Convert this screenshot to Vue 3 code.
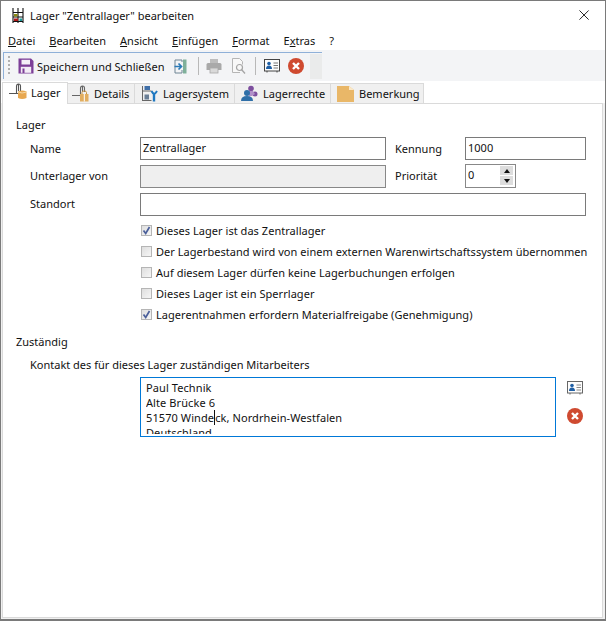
<script setup>
const checks = [
  { label: 'Dieses Lager ist das Zentrallager', on: true },
  { label: 'Der Lagerbestand wird von einem externen Warenwirtschaftssystem übernommen', on: false },
  { label: 'Auf diesem Lager dürfen keine Lagerbuchungen erfolgen', on: false },
  { label: 'Dieses Lager ist ein Sperrlager', on: false },
  { label: 'Lagerentnahmen erfordern Materialfreigabe (Genehmigung)', on: true }
]
</script>

<template>
  <div class="window">
    <header class="titlebar">
      <svg class="appicon" viewBox="0 0 12 15" width="12" height="15">
        <path d="M1 0v15M6 0v15M11 0v15M1 4.500h10M1 9h10M1 13.500h10" stroke="#111" stroke-width="1.100" fill="none"/>
        <rect x="2" y="6" width="3.500" height="2.500" fill="#8a8a10"/>
        <rect x="2" y="10.500" width="4" height="2.500" fill="#b01818"/>
        <rect x="7.500" y="10.500" width="2.500" height="2.500" fill="#1a9a9a"/>
      </svg>
      <span class="title">Lager "Zentrallager" bearbeiten</span>
      <svg class="close" viewBox="0 0 12 12" width="11" height="11">
        <path d="M.5.5l10 10M10.500.5l-10 10" stroke="#111" stroke-width="1" fill="none"/>
      </svg>
    </header>

    <nav class="menubar">
      <span class="menu"><u>D</u>atei</span>
      <span class="menu"><u>B</u>earbeiten</span>
      <span class="menu"><u>A</u>nsicht</span>
      <span class="menu"><u>E</u>infügen</span>
      <span class="menu"><u>F</u>ormat</span>
      <span class="menu">E<u>x</u>tras</span>
      <span class="menu">?</span>
    </nav>

    <div class="toolstrip">
      <div class="toolbar">
        <span class="grip"></span>
        <svg class="tool first" viewBox="0 0 16 16" width="16" height="16">
          <path d="M.5.500h12.500l2.500 2.500v12.500H.5z" fill="#7d3f98"/>
          <rect x="3.500" y="1.800" width="8.500" height="4.700" fill="#f6f1f8"/>
          <rect x="2.800" y="8.800" width="10.400" height="6" fill="#f3edf6"/>
          <rect x="4.500" y="10.500" width="2" height="4.500" fill="#7d3f98"/>
        </svg>
        <span class="savetext">Speichern und Schließen</span>
        <svg class="tool exit" viewBox="0 0 13 15" width="13" height="15">
          <path d="M8 3V1H1v13h7v-3" stroke="#6f8594" fill="none"/>
          <rect x="9" y=".5" width="3.500" height="14" fill="#7fb09a"/>
          <path d="M.5 7.500h6.500M4.500 4.500l3 3-3 3" stroke="#2a7ab8" stroke-width="1.700" fill="none"/>
        </svg>
        <span class="sep"></span>
        <svg class="tool print" viewBox="0 0 16 16" width="16" height="16">
          <rect x="4" y="1" width="8" height="4" fill="#bdbdbd"/>
          <path d="M.5 6.500q0-1.500 1.500-1.500h12q1.500 0 1.500 1.500V12H.5z" fill="#a9a9a9"/>
          <rect x="4" y="10" width="8" height="5" fill="#d9d9d9" stroke="#a9a9a9" stroke-width=".8"/>
        </svg>
        <svg class="tool preview" viewBox="0 0 16 16" width="16" height="16">
          <path d="M9 14.500H1.500V.5h7l3 3v3" stroke="#b5b5b5" fill="#f8f8f8"/>
          <circle cx="8.500" cy="9.500" r="3" stroke="#a5a5a5" fill="#f8f8f8" stroke-width="1.200"/>
          <path d="M10.500 11.500l3.500 4" stroke="#a5a5a5" stroke-width="1.400"/>
        </svg>
        <span class="sep second"></span>
        <svg class="tool card" viewBox="0 0 16 14" width="16" height="14">
          <rect x=".5" y=".5" width="15" height="11.500" fill="#fdfdfd" stroke="#444"/>
          <circle cx="5" cy="4.500" r="1.800" fill="#1f5fa5"/>
          <path d="M2 10q0-3.500 3-3.500t3 3.500z" fill="#1f5fa5"/>
          <path d="M9.500 4h4.500M9.500 6.500h4.500M9.500 9h4.500" stroke="#777"/>
          <path d="M3 12v1.500M13 12v1.500" stroke="#444"/>
        </svg>
        <svg class="tool cancel" viewBox="0 0 16 16" width="16" height="16">
          <circle cx="8" cy="8" r="8" fill="#cf4a30"/>
          <path d="M5 5l6 6M11 5l-6 6" stroke="#fff" stroke-width="2.400"/>
        </svg>
        <span class="blank"></span>
      </div>
    </div>

    <div class="tabs">
      <div class="tab active">
        <svg viewBox="0 0 18 17" width="18" height="17">
          <path d="M0 10.500h9M7.500 10.500V3.500Q7.500 1 9.500 1T11.500 3v5M9.500 1v7" stroke="#555" stroke-width="1.100" fill="none"/>
          <path d="M9 8.500q4-2 8.500 0v6.500q-4.500 2-8.500 0z" fill="#e8a850"/>
          <path d="M9 9q4 2 8.500 0" stroke="#f6d9a8" fill="none"/>
        </svg>
        <span>Lager</span>
      </div>
      <div class="tab details">
        <svg viewBox="0 0 17 17" width="17" height="17">
          <path d="M0 10.500h9M8.500 10V3.500Q8.500 1 10.500 1T12.500 3v4M10.500 1v6" stroke="#666" stroke-width="1.100" fill="none"/>
          <path d="M8 9h8.500v7.500H8z" fill="#e2ae5f"/>
          <path d="M12.300 9v7.500" stroke="#fff"/>
          <path d="M10 9V7.500Q10 6 12.300 6T14.500 7.500V9" stroke="#c99643" fill="none"/>
        </svg>
        <span>Details</span>
      </div>
      <div class="tab system">
        <svg viewBox="0 0 17 17" width="17" height="17">
          <path d="M1.500 1v15M1.500 15.500h9M1.500 6h9" stroke="#666" fill="none"/>
          <rect x="3.500" y="1" width="5.500" height="4" fill="#3f6fa8"/>
          <rect x="3.500" y="9.500" width="4.500" height="5" fill="#6a7f96"/>
          <path d="M13 9v7.500" stroke="#1f78c0" stroke-width="2.400"/>
          <path d="M10.500 6q2.500 5.500 5.500 0" stroke="#1f78c0" stroke-width="2" fill="none"/>
        </svg>
        <span>Lagersystem</span>
      </div>
      <div class="tab rights">
        <svg viewBox="0 0 17 17" width="17" height="17">
          <circle cx="10" cy="3.500" r="2.800" fill="#7d4f9e"/>
          <circle cx="14" cy="9" r="2.500" fill="#7d4f9e"/>
          <path d="M7 6h5l2 3-3 2H8z" fill="#b090c8"/>
          <circle cx="6" cy="8" r="3" fill="#2f6fa8"/>
          <path d="M0 16q0-5 6-5t6 5z" fill="#2f6fa8"/>
        </svg>
        <span>Lagerrechte</span>
      </div>
      <div class="tab note">
        <svg viewBox="0 0 17 16" width="17" height="16">
          <path d="M0 0h12l5 4v12H0z" fill="#e9b768"/>
          <path d="M12 0l5 4h-5z" fill="#fbe9c9"/>
        </svg>
        <span>Bemerkung</span>
      </div>
    </div>

    <div class="pagewrap">
      <main class="page">
        <section>
          <h2 class="grouptitle">Lager</h2>
          <div class="row first-row">
            <label class="lbl">Name</label>
            <div class="field wide">Zentrallager</div>
            <label class="lbl2">Kennung</label>
            <div class="field short">1000</div>
          </div>
          <div class="row second-row">
            <label class="lbl lift">Unterlager von</label>
            <div class="field wide disabled"></div>
            <label class="lbl2 lift">Priorität</label>
            <div class="field spin">
              <span class="spinval">0</span>
              <span class="spinbtns">
                <span class="sbtn"><i class="up"></i></span>
                <span class="sbtn"><i class="down"></i></span>
              </span>
            </div>
          </div>
          <div class="row third-row">
            <label class="lbl lift">Standort</label>
            <div class="field full"></div>
          </div>
          <ul class="checks">
            <li v-for="c in checks" :key="c.label" class="check">
              <span class="box">
                <svg v-if="c.on" viewBox="0 0 11 11" width="11" height="11">
                  <path d="M2.500 5.500l2.200 3 3.800-6.500" stroke="#4a5f9a" stroke-width="1.700" fill="none"/>
                </svg>
              </span>
              <span>{{ c.label }}</span>
            </li>
          </ul>
        </section>

        <section class="second-group">
          <h2 class="grouptitle">Zuständig</h2>
          <p class="hint">Kontakt des für dieses Lager zuständigen Mitarbeiters</p>
          <div class="contact">
            <div class="memo">
              <div class="memotext">
                <div>Paul Technik</div>
                <div>Alte Brücke 6</div>
                <div>51570 Winde<span class="caret"></span>ck, Nordrhein-Westfalen</div>
                <div>Deutschland</div>
              </div>
            </div>
            <div class="memoicons">
              <svg viewBox="0 0 16 14" width="16" height="14">
                <rect x=".5" y=".5" width="15" height="11.500" fill="#fdfdfd" stroke="#666"/>
                <circle cx="5" cy="4.500" r="1.800" fill="#1f5fa5"/>
                <path d="M2 10q0-3.500 3-3.500t3 3.500z" fill="#1f5fa5"/>
                <path d="M9.500 4h4.500M9.500 6.500h4.500M9.500 9h4.500" stroke="#888"/>
                <path d="M3 12v1.500M13 12v1.500" stroke="#666"/>
              </svg>
              <svg viewBox="0 0 16 16" width="16" height="16">
                <circle cx="8" cy="8" r="8" fill="#cf4a30"/>
                <path d="M5 5l6 6M11 5l-6 6" stroke="#fff" stroke-width="2.400"/>
              </svg>
            </div>
          </div>
        </section>
      </main>
    </div>
  </div>
</template>

<style>
html, body { margin: 0; padding: 0; background: #fff; }
</style>

<style scoped>
.window {
  width: 606px;
  height: 621px;
  box-sizing: border-box;
  border: 1px solid #7a7a7a;
  border-bottom-width: 2px;
  background: #fff;
  font-family: "Noto Sans", "Open Sans", sans-serif;
  font-size: 11px;
  color: #111;
  display: flex;
  flex-direction: column;
  overflow: hidden;
}
.titlebar {
  height: 29px;
  display: flex;
  align-items: center;
  padding: 0 10px 0 11px;
  flex: none;
}
.title { margin-left: 6px; flex: 1; }
.close { margin-right: 5px; }
.menubar {
  height: 20px;
  display: flex;
  align-items: center;
  gap: 14px;
  padding-left: 7px;
  flex: none;
}
.toolstrip {
  height: 31px;
  background: #f3f4f6;
  flex: none;
  padding: 2px 0 0 2px;
  box-sizing: border-box;
}
.toolbar {
  width: 319px;
  height: 27px;
  display: flex;
  align-items: center;
  border-top: 1px solid #8fb0d8;
  border-left: 1px solid #8fb0d8;
  box-sizing: border-box;
  padding-left: 4px;
}
.grip { width: 2px; height: 20px; background: repeating-linear-gradient(#b0b0b0 0 2px, transparent 2px 4px); flex: none; }
.tool { flex: none; }
.first { margin-left: 8px; }
.savetext { margin-left: 3px; white-space: nowrap; flex: none; }
.exit { margin-left: 9px; }
.sep { width: 1px; height: 18px; background: #b8b8b8; margin: 0 7px 0 11px; flex: none; }
.preview { margin-left: 9px; }
.sep.second { margin: 0 8px; }
.cancel { margin-left: 8px; }
.blank { width: 12px; height: 25px; background: #eaebeb; margin-left: 6px; flex: none; }
.tabs {
  display: flex;
  align-items: flex-end;
  height: 22px;
  padding-left: 1px;
  flex: none;
}
.tab {
  height: 19px;
  box-sizing: content-box;
  display: flex;
  align-items: center;
  gap: 5px;
  padding: 0 0 0 6px;
  background: #f0f0f0;
  border: 1px solid #dadada;
  border-bottom: 0;
  border-left: 0;
  white-space: nowrap;
}
.tab svg { flex: none; }
.tab.active {
  width: 58px;
  height: 21px;
  background: #fff;
  border-left: 1px solid #dadada;
  padding-left: 6px;
  gap: 4px;
  margin-bottom: -1px;
  position: relative;
  z-index: 1;
  align-items: flex-start;
}
.tab.active span { margin-top: 2px; }
.details { width: 62px; padding-left: 4px; }
.system { width: 93px; }
.rights { width: 89px; }
.note { width: 86px; }
.pagewrap {
  flex: 1;
  display: flex;
  background: #f0f0f0;
  padding: 0 2px 1px 1px;
  min-height: 0;
}
.page {
  flex: 1;
  background: #fff;
  border: 1px solid #dadada;
  padding: 13px 0 0 13px;
}
.grouptitle { font-size: 11px; font-weight: 400; margin: 0; line-height: 16px; }
.row {
  display: flex;
  align-items: center;
}
.first-row { margin-top: 4px; }
.second-row { margin-top: 4px; }
.third-row { margin-top: 5px; }
.lbl { width: 110px; padding-left: 14px; flex: none; box-sizing: content-box; }
.lbl2 { width: 70px; margin-left: 9px; flex: none; }
.lift { padding-bottom: 2px; }
.field {
  box-sizing: border-box;
  height: 23px;
  border: 1px solid #7a7a7a;
  padding: 0 2px;
  line-height: 19px;
}
.wide { width: 246px; }
.short { width: 121px; }
.full { width: 446px; }
.disabled { background: #efefef; border-color: #888; }
.spin { width: 51px; height: 24px; display: flex; justify-content: space-between; border-color: #888; }
.spinbtns { display: flex; flex-direction: column; gap: 1px; padding: 1px 1px 1px 0; margin-right: -1px; }
.sbtn { width: 13px; height: 9px; background: #ddd; display: flex; align-items: center; justify-content: center; }
.up { border: 3px solid transparent; border-top: 0; border-bottom: 4px solid #111; }
.down { border: 3px solid transparent; border-bottom: 0; border-top: 4px solid #111; }
.checks { list-style: none; margin: 4px 0 0 125px; padding: 0; letter-spacing: .04px; }
.check {
  display: flex;
  align-items: center;
  gap: 4px;
  height: 21px;
  white-space: nowrap;
}
.box {
  width: 11px;
  height: 11px;
  box-sizing: border-box;
  background: linear-gradient(135deg, #dedede, #f6f6f6);
  border: 1px solid #b5b5b5;
  display: flex;
  align-items: center;
  justify-content: center;
  flex: none;
}
.box svg { flex: none; }
.second-group { margin-top: 9px; }
.hint { margin: 7px 0 0 14px; line-height: 16px; }
.contact { display: flex; margin-top: 4px; margin-left: 124px; }
.memo {
  box-sizing: border-box;
  width: 416px;
  height: 60px;
  border: 1px solid #0078d7;
  padding: 2px 5px 0;
  line-height: 15px;
  letter-spacing: .09px;
}
.memotext { height: 54px; overflow: hidden; }
.caret {
  display: inline-block;
  width: 1px;
  height: 15px;
  background: #111;
  vertical-align: top;
}
.memoicons {
  display: flex;
  flex-direction: column;
  align-items: center;
  gap: 13px;
  margin-left: 11px;
  padding-top: 4px;
}
</style>
